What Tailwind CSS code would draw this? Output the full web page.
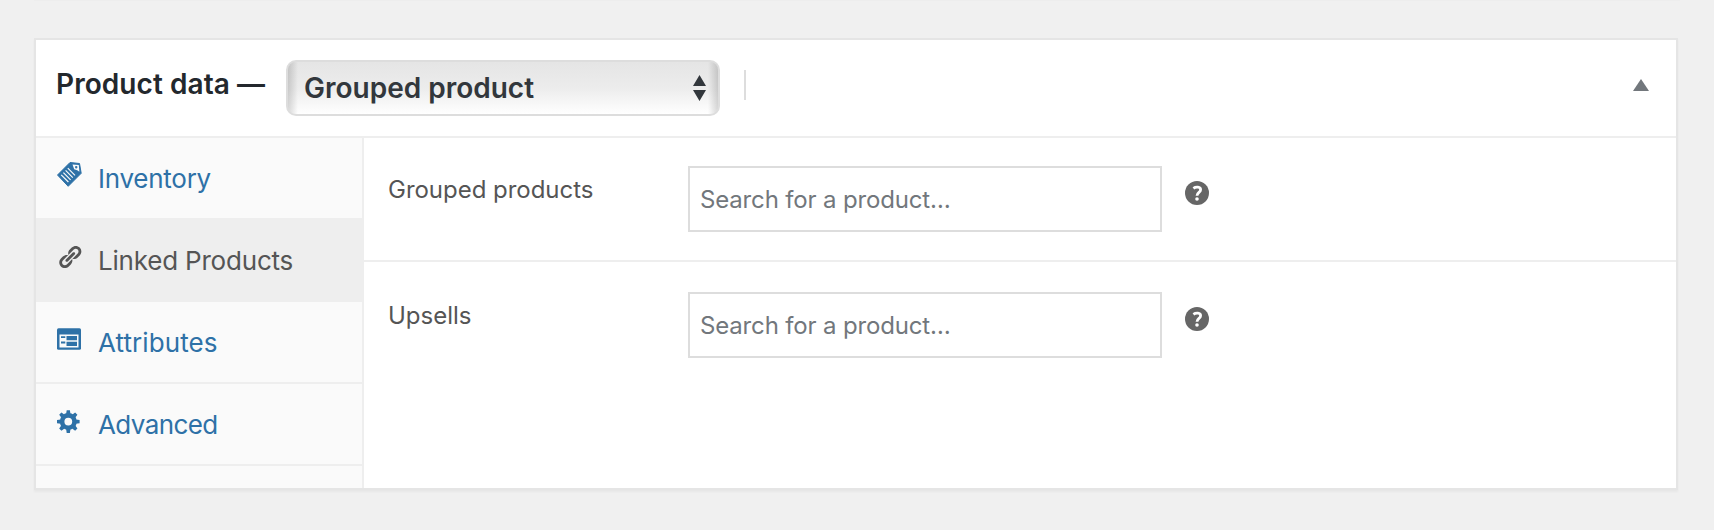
<!DOCTYPE html>
<html lang="en">
<head>
<meta charset="utf-8">
<title>Product data</title>
<script src="https://cdn.jsdelivr.net/npm/@tailwindcss/browser@4"></script>
</head>
<body class="bg-[#f0f0f0] font-['Inter',sans-serif] h-[530px] overflow-hidden px-[34px]">
<div class="h-px bg-[#ededed]"></div>
<section class="mt-[37px] w-[1644px] h-[452px] border-2 border-[#e5e5e5] bg-white shadow-[0_2px_2px_rgba(0,0,0,0.04)] flex flex-col">
  <header class="h-[98px] shrink-0 border-b-2 border-[#eee] flex items-start pl-[20px] pr-[27px]">
    <h2 class="w-[230px] pt-[27px] text-[28px] leading-[34px] font-semibold tracking-[0.07px] text-[#23282d] whitespace-nowrap">Product data —</h2>
    <div class="mt-[20px] w-[434px] h-[56px] rounded-[10px] border-2 border-[#ddd] bg-linear-to-b from-[#e5e5e5] via-[#ececec] to-white flex">
      <div class="flex-1 rounded-[8px] bg-[linear-gradient(to_right,rgba(0,0,0,0.15),rgba(0,0,0,0.09)_4px,transparent_10px,transparent_calc(100%-10px),rgba(0,0,0,0.09)_calc(100%-4px),rgba(0,0,0,0.15))] flex items-center justify-between pl-[16px] pr-[12px]">
        <span class="text-[28px] leading-[34px] font-semibold text-[#32373c]">Grouped product</span>
        <svg class="w-[13px] h-[26px]" viewBox="0 0 13 26" fill="#32373c"><path d="M6.5 0 13 11H0zM0 15h13L6.5 26z"/></svg>
      </div>
    </div>
    <div class="mt-[30px] ml-[24px] w-[2px] h-[30px] bg-[#ddd]"></div>
    <svg class="ml-auto mt-[39px] w-[16px] h-[12px]" viewBox="0 0 16 12" fill="#72777c"><path d="M8 0 16 12H0z"/></svg>
  </header>
  <div class="flex flex-1">
    <nav class="w-[328px] border-r-2 border-[#eee] bg-[#fafafa] text-[26px] leading-[32px] text-[#2e71a7]">
      <a class="flex h-[82px] border-b-2 border-[#eee] pl-[20px] pt-[25px]">
        <svg class="w-[26px] h-[26px] -mt-[2px] mr-[16px] shrink-0" viewBox="0 0 26 26"><path d="M14 1.5 23.5 2.5 25.2 12.3 12.2 25.3 1.5 14z" fill="currentColor" stroke="currentColor" stroke-linejoin="round"/><path d="M16.5 3.6 22.8 4l.6 6.8-2.2-1.6-3-1z" fill="#fafafa"/><path d="M19 6.2h2.4M20.2 5v2.4" stroke="currentColor" stroke-width="1.2"/><path d="M5.2 13.8 12.4 21M7.4 11.6 14.6 18.8M9.6 9.4 16.8 16.6M11.8 7.2 19 14.4" stroke="#fafafa" stroke-width="1.2"/></svg>
        <span class="tracking-[-0.25px]">Inventory</span>
      </a>
      <a class="flex h-[82px] border-b-2 border-[#eee] bg-[#eee] w-[328px] pl-[20px] pt-[25px] text-[#555]">
        <svg class="w-[26px] h-[26px] -mt-[1px] mr-[16px] shrink-0" viewBox="-0.5 0 20 20" fill="currentColor"><path d="M17.74 2.76c1.68 1.69 1.68 4.41 0 6.1l-1.53 1.52c-1.12 1.12-2.7 1.47-4.14 1.09l2.62-2.61.76-.77.76-.76c.84-.84.84-2.2 0-3.04-.84-.85-2.2-.85-3.04 0l-.77.76-3.38 3.38c-.37-1.44-.02-3.02 1.1-4.14l1.52-1.53c1.69-1.68 4.42-1.68 6.1 0zM8.59 13.43l5.34-5.34c.42-.42.42-1.1 0-1.52-.44-.43-1.13-.39-1.53 0l-5.33 5.34c-.42.42-.42 1.1 0 1.52.44.43 1.13.39 1.52 0zm-.76 2.29l4.14-4.15c.38 1.44.03 3.02-1.09 4.14l-1.52 1.53c-1.69 1.68-4.41 1.68-6.1 0-1.68-1.68-1.68-4.42 0-6.1l1.53-1.52c1.12-1.12 2.7-1.47 4.14-1.1l-4.14 4.15c-.85.84-.85 2.2 0 3.05.84.84 2.2.84 3.04 0z"/></svg>
        <span class="tracking-[-0.2px]">Linked Products</span>
      </a>
      <a class="flex h-[82px] border-b-2 border-[#eee] pl-[20px] pt-[25px]">
        <svg class="w-[26px] h-[26px] -mt-[2px] mr-[16px] shrink-0" viewBox="0 0 26 26"><rect x="1" y="3.2" width="24" height="21.6" rx="1.5" fill="currentColor"/><path d="M3.5 9.5h19v13h-19z" fill="#fafafa"/><path d="M10.5 11h10.5v4.2H10.5zM10.5 16.8h10.5V21H10.5zM5 11.3h4.3v1.8H5zM5 16.6h4.3v1.8H5z" fill="currentColor"/></svg>
        <span class="tracking-[0.08px]">Attributes</span>
      </a>
      <a class="flex h-[82px] border-b-2 border-[#eee] pl-[20px] pt-[25px]">
        <svg class="w-[26px] h-[26px] -mt-[1px] mr-[16px] shrink-0" viewBox="0 0 26 26"><g transform="translate(12.3 13.6)" fill="currentColor"><circle r="6.2" fill="none" stroke="currentColor" stroke-width="4.6"/><g id="teeth"><path d="M-2.2-7.5-1.6-11.3H1.6L2.2-7.5zM-2.2 7.5-1.6 11.3H1.6L2.2 7.5z"/><path d="M-7.5-2.2-11.3-1.6V1.6L-7.5 2.2zM7.5-2.2 11.3-1.6V1.6L7.5 2.2z"/></g><use href="#teeth" transform="rotate(45)"/></g></svg>
        <span class="tracking-[-0.6px]">Advanced</span>
      </a>
    </nav>
    <main class="flex-1 text-[24px] leading-[30px] text-[#555]">
      <div class="flex items-start h-[124px] border-b-2 border-[#eee] pl-[24px] pt-[28px]">
        <label class="w-[300px] pt-[9px] tracking-[-0.03px]">Grouped products</label>
        <div class="w-[474px] h-[66px] border-2 border-[#ddd] pl-[10px] pt-[17px] tracking-[-0.16px] text-[#72777c]">Search for a product…</div>
        <svg class="ml-[23px] mt-[15px] w-[24px] h-[24px]" viewBox="0 0 24 24"><circle cx="12" cy="12" r="12" fill="#666"/><path d="M8.4 7.3C10.8 5.6 15.6 5.5 15.6 8.7 15.6 11.5 12 11.3 12 14.8" fill="none" stroke="#fff" stroke-width="2.8"/><circle cx="12" cy="18" r="1.8" fill="#fff"/></svg>
      </div>
      <div class="flex items-start pl-[24px] pt-[30px]">
        <label class="w-[300px] pt-[9px]">Upsells</label>
        <div class="w-[474px] h-[66px] border-2 border-[#ddd] pl-[10px] pt-[17px] tracking-[-0.16px] text-[#72777c]">Search for a product…</div>
        <svg class="ml-[23px] mt-[15px] w-[24px] h-[24px]" viewBox="0 0 24 24"><circle cx="12" cy="12" r="12" fill="#666"/><path d="M8.4 7.3C10.8 5.6 15.6 5.5 15.6 8.7 15.6 11.5 12 11.3 12 14.8" fill="none" stroke="#fff" stroke-width="2.8"/><circle cx="12" cy="18" r="1.8" fill="#fff"/></svg>
      </div>
    </main>
  </div>
</section>
</body>
</html>
